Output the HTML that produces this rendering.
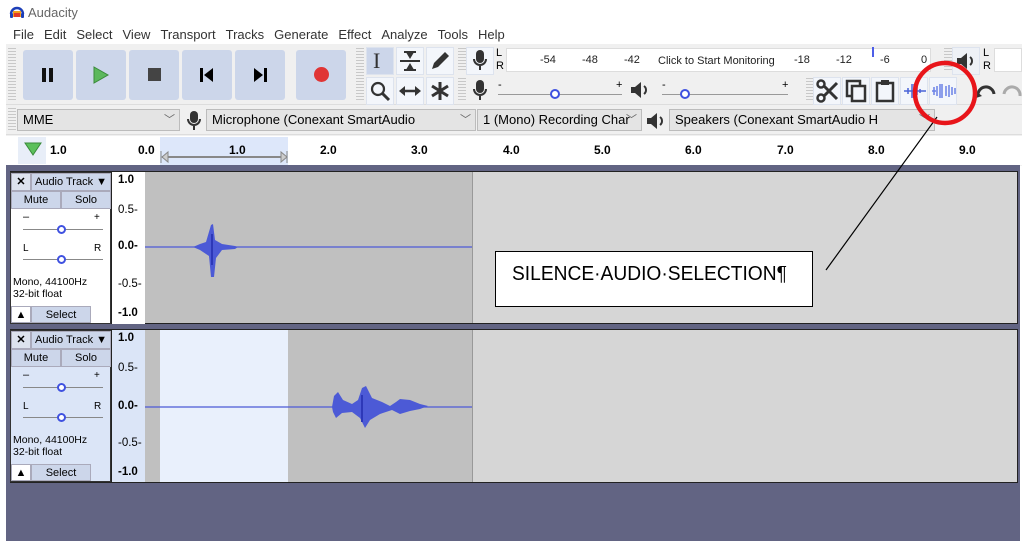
<!DOCTYPE html>
<html><head><meta charset="utf-8"><style>
*{box-sizing:border-box;margin:0;padding:0}
body{width:1022px;height:541px;background:#fff;position:relative;overflow:hidden;font-family:"Liberation Sans",sans-serif;font-size:12px;color:#000}
.a{position:absolute}
.btn{position:absolute;background:#ccd6ea;border-radius:3px}
.tb{position:absolute;background:#f0f0f0}
.tool{position:absolute;width:28px;height:28px;background:#f3f6fb;border:1px solid #dde3ee}
.combo{position:absolute;height:22px;background:#e4e4e4;border:1px solid #bcbcbc;font-size:13px;line-height:20px;padding-left:5px;white-space:nowrap;overflow:hidden}
.combo span{position:absolute;right:4px;top:0;color:#666;font-size:11px}
.tp{position:absolute;left:10px;width:101px;height:152px;border:1px solid #333;background:#fff;font-size:11px}
.tp .b{position:absolute;background:#ccd6ea;border:1px solid #aab;text-align:center;line-height:16px}
.vr{position:absolute;left:112px;width:33px;height:152px;background:#fff;font-size:11.5px}
.vr div{position:absolute;left:6px}
.grip{position:absolute;width:8px;background:repeating-linear-gradient(#c8c8c8 0 1px,#f0f0f0 1px 3px)}
</style></head><body>
<svg class="a" style="left:9px;top:4px" width="16" height="14" viewBox="0 0 16 14"><path d="M2 10 A6 6 0 0 1 14 10" stroke="#1d3fb8" stroke-width="2.4" fill="none"/><rect x="4" y="7" width="8" height="6" fill="#f3a01e"/><rect x="5" y="9" width="6" height="4" fill="#e23b2a"/><rect x="1" y="9" width="3" height="5" rx="1" fill="#1d3fb8"/><rect x="12" y="9" width="3" height="5" rx="1" fill="#1d3fb8"/></svg>
<div class="a" style="left:28px;top:5px;font-size:13px;color:#666">Audacity</div>
<div class="a" style="left:13px;top:27px;font-size:13px;white-space:nowrap;color:#333">
<span style="margin-right:10px">File</span><span style="margin-right:10px">Edit</span><span style="margin-right:10px">Select</span><span style="margin-right:10px">View</span><span style="margin-right:10px">Transport</span><span style="margin-right:10px">Tracks</span><span style="margin-right:10px">Generate</span><span style="margin-right:10px">Effect</span><span style="margin-right:10px">Analyze</span><span style="margin-right:10px">Tools</span><span>Help</span></div>
<div class="tb" style="left:6px;top:44px;width:1016px;height:122px"></div>
<div class="a" style="left:6px;top:104px;width:1016px;height:1px;background:#ddd"></div>
<div class="a" style="left:6px;top:134px;width:1016px;height:1px;background:#ddd"></div>
<div class="grip" style="left:8px;top:48px;height:54px"></div>
<div class="btn" style="left:23px;top:50px;width:50px;height:50px"></div>
<div class="btn" style="left:76px;top:50px;width:50px;height:50px"></div>
<div class="btn" style="left:129px;top:50px;width:50px;height:50px"></div>
<div class="btn" style="left:182px;top:50px;width:50px;height:50px"></div>
<div class="btn" style="left:235px;top:50px;width:50px;height:50px"></div>
<div class="btn" style="left:296px;top:50px;width:50px;height:50px"></div>
<div class="a" style="left:42px;top:68px;width:4px;height:14px;background:#111"></div><div class="a" style="left:49px;top:68px;width:4px;height:14px;background:#111"></div>
<svg class="a" style="left:92px;top:66px" width="18" height="18"><path d="M2 1 L16 9 L2 17Z" fill="#5cb85c" stroke="#3a8a3a"/></svg>
<div class="a" style="left:148px;top:68px;width:13px;height:13px;background:#444"></div>
<svg class="a" style="left:200px;top:68px" width="14" height="14"><rect x="0" y="0" width="3" height="14"/><path d="M13 0 L4 7 L13 14Z"/></svg>
<svg class="a" style="left:253px;top:68px" width="14" height="14"><rect x="11" y="0" width="3" height="14"/><path d="M1 0 L10 7 L1 14Z"/></svg>
<div class="a" style="left:314px;top:67px;width:15px;height:15px;border-radius:50%;background:#e03535"></div>
<div class="grip" style="left:356px;top:48px;height:54px"></div>
<div class="tool" style="left:366px;top:47px;background:#ccd6ea"></div>
<div class="tool" style="left:396px;top:47px"></div><div class="tool" style="left:426px;top:47px"></div>
<div class="tool" style="left:366px;top:77px"></div><div class="tool" style="left:396px;top:77px"></div><div class="tool" style="left:426px;top:77px"></div>
<div class="a" style="left:373px;top:48px;font-size:22px;font-family:'Liberation Serif';color:#333">I</div>
<svg class="a" style="left:398px;top:50px" width="24" height="22"><path d="M6 2h12M9 2l3 5 3-5M2 11h20M9 20l3-5 3 5M6 20h12" stroke="#333" stroke-width="2" fill="#333"/></svg>
<svg class="a" style="left:429px;top:50px" width="22" height="22"><path d="M3 19 L5 13 L16 2 L20 6 L9 17Z" fill="#333"/></svg>
<svg class="a" style="left:370px;top:81px" width="22" height="22"><circle cx="8" cy="8" r="6" stroke="#333" stroke-width="2.2" fill="none"/><path d="M12 12 L19 19" stroke="#333" stroke-width="3"/></svg>
<svg class="a" style="left:398px;top:83px" width="24" height="16"><path d="M4 8h16" stroke="#333" stroke-width="2.5"/><path d="M1 8 L7 3 L7 13Z M23 8 L17 3 L17 13Z" fill="#333"/></svg>
<svg class="a" style="left:429px;top:80px" width="22" height="22"><path d="M11 2v18M3 6l16 10M19 6L3 16" stroke="#333" stroke-width="3"/></svg>
<div class="grip" style="left:458px;top:48px;height:24px"></div><div class="grip" style="left:458px;top:78px;height:24px"></div>
<div class="tool" style="left:466px;top:47px"></div>
<svg class="a" style="left:472px;top:49px" width="16" height="24"><rect x="4" y="1" width="8" height="13" rx="4" fill="#333"/><path d="M2 10a6 6 0 0 0 12 0M8 16v5" stroke="#333" stroke-width="2" fill="none"/></svg>
<svg class="a" style="left:472px;top:79px" width="16" height="24"><rect x="4" y="1" width="8" height="13" rx="4" fill="#333"/><path d="M2 10a6 6 0 0 0 12 0M8 16v5" stroke="#333" stroke-width="2" fill="none"/></svg>
<div class="a" style="left:496px;top:47px;font-size:11px;line-height:13px">L<br>R</div>
<div class="a" style="left:506px;top:48px;width:425px;height:24px;border:1px solid #ddd;background:#fff"></div>
<div class="a" style="left:506px;top:54px;font-size:11px;white-space:nowrap;color:#222;background:#fff">
<span class="a" style="left:34px">-54</span><span class="a" style="left:76px">-48</span><span class="a" style="left:118px">-42</span><span class="a" style="left:152px;top:1px">Click to Start Monitoring</span><span class="a" style="left:288px">-18</span><span class="a" style="left:330px">-12</span><span class="a" style="left:374px">-6</span><span class="a" style="left:415px">0</span></div>
<div class="a" style="left:872px;top:47px;width:2px;height:10px;background:#4d5ee8"></div>
<div class="a" style="left:498px;top:79px;font-size:11px">-</div><div class="a" style="left:616px;top:79px;font-size:11px">+</div>
<div class="a" style="left:498px;top:94px;width:124px;height:1px;background:#999"></div>
<div class="a" style="left:550px;top:89px;width:10px;height:10px;border-radius:50%;border:2.5px solid #3f51e0;background:#fff"></div>
<svg class="a" style="left:630px;top:81px" width="20" height="18"><path d="M1 6h4l6-5v16l-6-5H1Z" fill="#333"/><path d="M14 5a5 5 0 0 1 0 8" stroke="#333" stroke-width="2" fill="none"/></svg>
<div class="a" style="left:662px;top:79px;font-size:11px">-</div><div class="a" style="left:782px;top:79px;font-size:11px">+</div>
<div class="a" style="left:662px;top:94px;width:126px;height:1px;background:#999"></div>
<div class="a" style="left:680px;top:89px;width:10px;height:10px;border-radius:50%;border:2.5px solid #3f51e0;background:#fff"></div>
<div class="grip" style="left:806px;top:78px;height:24px"></div>
<div class="tool" style="left:813px;top:77px"></div><div class="tool" style="left:842px;top:77px"></div><div class="tool" style="left:871px;top:77px"></div><div class="tool" style="left:900px;top:77px"></div><div class="tool" style="left:929px;top:77px"></div>
<svg class="a" style="left:815px;top:79px" width="24" height="24"><circle cx="6" cy="5" r="3.5" stroke="#333" stroke-width="2.5" fill="none"/><circle cx="6" cy="19" r="3.5" stroke="#333" stroke-width="2.5" fill="none"/><path d="M9 7 L22 20M9 17 L22 4" stroke="#333" stroke-width="3"/></svg>
<svg class="a" style="left:845px;top:79px" width="24" height="24"><rect x="2" y="2" width="13" height="15" stroke="#333" stroke-width="2.5" fill="none"/><rect x="7" y="7" width="13" height="15" stroke="#333" stroke-width="2.5" fill="#f3f6fb"/></svg>
<svg class="a" style="left:874px;top:79px" width="24" height="24"><rect x="3" y="4" width="16" height="18" stroke="#333" stroke-width="2.5" fill="none"/><rect x="7" y="1" width="8" height="5" fill="#333"/></svg>
<svg class="a" style="left:903px;top:82px" width="24" height="18"><path d="M1 9h22M9 2v14M11 2v14M5 6v6M14 5v8M17 7v4" stroke="#4a63d8" stroke-width="1.5"/></svg>
<svg class="a" style="left:931px;top:82px" width="26" height="18"><path d="M1 9h4M9 2v14M11 2v14M3 5v8M6 4v10M15 4v10M18 3v12M21 5v8M24 6v6" stroke="#6b81e6" stroke-width="1.5"/></svg>
<svg class="a" style="left:975px;top:84px" width="22" height="16"><path d="M3 12 A8 8 0 0 1 19 10" stroke="#333" stroke-width="3" fill="none"/><path d="M0 6 L7 12 L1 14Z" fill="#333"/></svg>
<svg class="a" style="left:1001px;top:84px" width="22" height="16"><path d="M3 10 A8 8 0 0 1 19 12" stroke="#aaa" stroke-width="3" fill="none"/></svg>
<div class="grip" style="left:944px;top:48px;height:24px"></div>
<div class="tool" style="left:952px;top:47px;background:#eef1f6"></div>
<svg class="a" style="left:956px;top:52px" width="22" height="18"><path d="M1 6h4l6-5v16l-6-5H1Z" fill="#333"/><path d="M14 5a5 5 0 0 1 0 8" stroke="#333" stroke-width="2" fill="none"/></svg>
<div class="a" style="left:983px;top:47px;font-size:11px;line-height:13px">L<br>R</div>
<div class="a" style="left:994px;top:48px;width:28px;height:24px;border:1px solid #ddd;background:#fff"></div>
<div class="grip" style="left:8px;top:108px;height:24px"></div>
<div class="combo" style="left:17px;top:109px;width:163px">MME<span>﹀</span></div>
<svg class="a" style="left:186px;top:110px" width="16" height="22"><rect x="4" y="1" width="8" height="12" rx="4" fill="#333"/><path d="M2 9a6 6 0 0 0 12 0M8 15v5" stroke="#333" stroke-width="2" fill="none"/></svg>
<div class="combo" style="left:206px;top:109px;width:270px">Microphone (Conexant SmartAudio<span>﹀</span></div>
<div class="combo" style="left:477px;top:109px;width:165px">1 (Mono) Recording Char<span>﹀</span></div>
<svg class="a" style="left:646px;top:112px" width="22" height="18"><path d="M1 6h4l6-5v16l-6-5H1Z" fill="#333"/><path d="M14 5a5 5 0 0 1 0 8" stroke="#333" stroke-width="2" fill="none"/></svg>
<div class="combo" style="left:669px;top:109px;width:266px">Speakers (Conexant SmartAudio H<span>﹀</span></div>
<div class="a" style="left:6px;top:136px;width:1016px;height:29px;background:#fff"></div>
<div class="a" style="left:18px;top:137px;width:28px;height:27px;background:#e8eef8"></div>
<svg class="a" style="left:24px;top:142px" width="18" height="14"><path d="M1 1 L17 1 L9 13Z" fill="#5cc05c" stroke="#3a8a3a"/></svg>
<div class="a" style="left:160px;top:137px;width:128px;height:28px;background:#dde7fa"></div>
<svg class="a" style="left:160px;top:150px" width="130" height="14"><path d="M2 7h124" stroke="#888" stroke-width="2"/><path d="M1 1v12M127 1v12M2 7 L8 2 L8 12Z M127 7 L121 2 L121 12Z" stroke="#888" fill="#ccc"/></svg>
<div class="a" style="top:143px;font-size:12px;font-weight:bold;left:0;white-space:nowrap">
<span class="a" style="left:50px">1.0</span><span class="a" style="left:138px">0.0</span><span class="a" style="left:229px">1.0</span><span class="a" style="left:320px">2.0</span><span class="a" style="left:411px">3.0</span><span class="a" style="left:503px">4.0</span><span class="a" style="left:594px">5.0</span><span class="a" style="left:685px">6.0</span><span class="a" style="left:777px">7.0</span><span class="a" style="left:868px">8.0</span><span class="a" style="left:959px">9.0</span></div>
<div class="a" style="left:6px;top:165px;width:1014px;height:376px;background:#626483"></div>
<div class="a" style="left:10px;top:171px;width:1008px;height:153px;background:#222"></div>
<div class="a" style="left:10px;top:329px;width:1008px;height:154px;background:#222"></div>
<div class="a" style="left:145px;top:172px;width:872px;height:151px;background:#d6d6d6"></div>
<div class="a" style="left:145px;top:172px;width:328px;height:151px;background:#c0c0c0;border-right:1px solid #999"></div>
<div class="tp" style="top:172px">
<div class="b" style="left:0;top:0;width:20px;height:18px;background:#dde3ee;font-weight:bold">✕</div>
<div class="b" style="left:20px;top:0;width:80px;height:18px">Audio Track ▼</div>
<div class="b" style="left:0;top:18px;width:50px;height:18px">Mute</div><div class="b" style="left:50px;top:18px;width:50px;height:18px">Solo</div>
<div class="a" style="left:12px;top:38px">–</div><div class="a" style="left:83px;top:39px;font-size:10px">+</div>
<div class="a" style="left:12px;top:56px;width:80px;height:1px;background:#888"></div>
<div class="a" style="left:46px;top:52px;width:9px;height:9px;border-radius:50%;border:2.5px solid #3f51e0;background:#fff"></div>
<div class="a" style="left:12px;top:70px;font-size:10px">L</div><div class="a" style="left:83px;top:70px;font-size:10px">R</div>
<div class="a" style="left:12px;top:86px;width:80px;height:1px;background:#888"></div>
<div class="a" style="left:46px;top:82px;width:9px;height:9px;border-radius:50%;border:2.5px solid #3f51e0;background:#fff"></div>
<div class="a" style="left:2px;top:103px;font-size:10.5px;line-height:12px">Mono, 44100Hz<br>32-bit float</div>
<div class="b" style="left:0;top:133px;width:20px;height:17px;background:#fff">▲</div>
<div class="b" style="left:20px;top:133px;width:60px;height:17px">Select</div>
</div>
<div class="vr" style="top:172px"><div style="top:2px;font-weight:bold">1.0</div><div style="top:32px">0.5-</div><div style="top:68px;font-weight:bold">0.0-</div><div style="top:106px">-0.5-</div><div style="top:135px;font-weight:bold">-1.0</div></div>
<div class="a" style="left:145px;top:330px;width:872px;height:152px;background:#d6d6d6"></div>
<div class="a" style="left:145px;top:330px;width:328px;height:152px;background:#c0c0c0;border-right:1px solid #999"></div>
<div class="a" style="left:160px;top:330px;width:128px;height:152px;background:#e9f0fc"></div>
<div class="tp" style="top:330px;background:#dbe5f7">
<div class="b" style="left:0;top:0;width:20px;height:18px;background:#dde3ee;font-weight:bold">✕</div>
<div class="b" style="left:20px;top:0;width:80px;height:18px">Audio Track ▼</div>
<div class="b" style="left:0;top:18px;width:50px;height:18px">Mute</div><div class="b" style="left:50px;top:18px;width:50px;height:18px">Solo</div>
<div class="a" style="left:12px;top:38px">–</div><div class="a" style="left:83px;top:39px;font-size:10px">+</div>
<div class="a" style="left:12px;top:56px;width:80px;height:1px;background:#888"></div>
<div class="a" style="left:46px;top:52px;width:9px;height:9px;border-radius:50%;border:2.5px solid #3f51e0;background:#fff"></div>
<div class="a" style="left:12px;top:70px;font-size:10px">L</div><div class="a" style="left:83px;top:70px;font-size:10px">R</div>
<div class="a" style="left:12px;top:86px;width:80px;height:1px;background:#888"></div>
<div class="a" style="left:46px;top:82px;width:9px;height:9px;border-radius:50%;border:2.5px solid #3f51e0;background:#fff"></div>
<div class="a" style="left:2px;top:103px;font-size:10.5px;line-height:12px">Mono, 44100Hz<br>32-bit float</div>
<div class="b" style="left:0;top:133px;width:20px;height:17px;background:#fff">▲</div>
<div class="b" style="left:20px;top:133px;width:60px;height:17px">Select</div>
</div>
<div class="vr" style="top:330px;background:#dbe5f7"><div style="top:2px;font-weight:bold">1.0</div><div style="top:32px">0.5-</div><div style="top:70px;font-weight:bold">0.0-</div><div style="top:107px">-0.5-</div><div style="top:136px;font-weight:bold">-1.0</div></div>
<svg class="a" style="left:0;top:0" width="1022" height="541">
<path d="M145 247H472M145 407H472" stroke="#4c5ad6" stroke-width="1.2"/>
<path d="M193 247 L200 244 L206 242 L211 225 L213 224 L215 240 L222 244 L235 246 L238 247 L235 249 L222 250 L216 258 L214 277 L211 277 L209 256 L200 250 Z" fill="#4c5ad6"/>
<path d="M332 407 L334 396 L338 392 L343 400 L352 404 L358 400 L362 388 L366 386 L372 398 L382 402 L390 406 L396 402 L400 399 L410 400 L420 404 L428 406 L420 409 L410 411 L400 414 L392 410 L380 414 L370 420 L365 428 L360 418 L352 412 L342 413 L336 418 L333 412 Z" fill="#4c5ad6"/>
<path d="M212 234V265M362 395V422" stroke="#2d38b8" stroke-width="2"/>
<path d="M826 270 L937 117" stroke="#000" stroke-width="1.2"/>
<circle cx="945" cy="93" r="30" stroke="#e8151a" stroke-width="4.5" fill="none"/>
</svg>
<div class="a" style="left:495px;top:251px;width:318px;height:56px;background:#fff;border:1.5px solid #000"></div>
<div class="a" style="left:512px;top:263px;font-size:20px;white-space:nowrap;transform:scaleX(0.96);transform-origin:left">SILENCE·AUDIO·SELECTION¶</div>
</body></html>
